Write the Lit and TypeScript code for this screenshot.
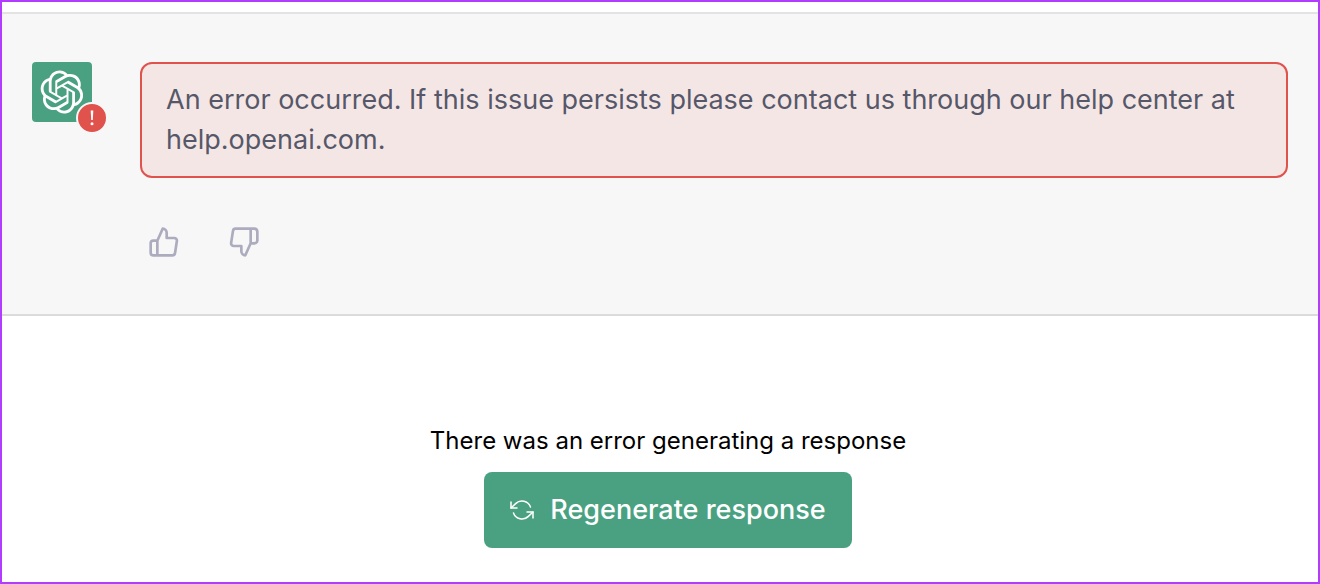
import { LitElement, html, css, svg } from "lit";
import { customElement, state } from "lit/decorators.js";

const logo = svg`<path fill="currentColor" d="M37.5324 16.8707C37.9808 15.5241 38.1363 14.0974 37.9886 12.6859C37.8409 11.2744 37.3934 9.91076 36.676 8.68622C35.6126 6.83404 33.9882 5.3676 32.0373 4.4985C30.0864 3.62941 27.9098 3.40259 25.8215 3.85078C24.8796 2.7893 23.7219 1.94125 22.4257 1.36341C21.1295 0.785575 19.7249 0.491269 18.3058 0.500197C16.1708 0.495044 14.0893 1.16803 12.3614 2.42214C10.6335 3.67624 9.34853 5.44666 8.6917 7.47815C7.30085 7.76286 5.98686 8.3414 4.8377 9.17505C3.68854 10.0087 2.73073 11.0782 2.02839 12.312C0.956464 14.1591 0.498905 16.2988 0.721698 18.4228C0.944492 20.5467 1.83612 22.5449 3.268 24.1293C2.81966 25.4759 2.66413 26.9026 2.81182 28.3141C2.95951 29.7256 3.40701 31.0892 4.12437 32.3138C5.18791 34.1659 6.8123 35.6322 8.76321 36.5013C10.7141 37.3704 12.8907 37.5973 14.9789 37.1492C15.9208 38.2107 17.0786 39.0587 18.3747 39.6366C19.6709 40.2144 21.0755 40.5087 22.4946 40.4998C24.6307 40.5054 26.7133 39.8321 28.4418 38.5772C30.1704 37.3223 31.4556 35.5506 32.1119 33.5179C33.5027 33.2332 34.8167 32.6547 35.9659 31.821C37.115 30.9874 38.0728 29.9178 38.7752 28.684C39.8458 26.8371 40.3023 24.6979 40.0789 22.5748C39.8556 20.4517 38.9639 18.4544 37.5324 16.8707ZM22.4978 37.8849C20.7443 37.8874 19.0459 37.2733 17.6994 36.1501C17.7601 36.117 17.8666 36.0586 17.936 36.0161L25.9004 31.4156C26.1003 31.3019 26.2663 31.137 26.3813 30.9378C26.4964 30.7386 26.5563 30.5124 26.5549 30.2825V19.0542L29.9213 20.998C29.9389 21.0068 29.9541 21.0198 29.9656 21.0359C29.977 21.052 29.9842 21.0707 29.9867 21.0902V30.3889C29.9842 32.375 29.1946 34.2791 27.7909 35.6841C26.3872 37.0892 24.4838 37.8806 22.4978 37.8849ZM6.39227 31.0064C5.51397 29.4888 5.19742 27.7107 5.49804 25.9832C5.55718 26.0187 5.66048 26.0818 5.73461 26.1244L13.699 30.7248C13.8975 30.8408 14.1233 30.902 14.3532 30.902C14.583 30.902 14.8088 30.8408 15.0073 30.7248L24.731 25.1103V28.9979C24.7321 29.0177 24.7283 29.0376 24.7199 29.0556C24.7115 29.0736 24.6988 29.0893 24.6829 29.1012L16.6317 33.7497C14.9096 34.7416 12.8643 35.0097 10.9447 34.4954C9.02506 33.9811 7.38785 32.7263 6.39227 31.0064ZM4.29707 13.6194C5.17156 12.0998 6.55279 10.9364 8.19885 10.3327C8.19885 10.4013 8.19491 10.5228 8.19491 10.6071V19.808C8.19351 20.0378 8.25334 20.2638 8.36823 20.4629C8.48312 20.6619 8.64893 20.8267 8.84863 20.9404L18.5723 26.5542L15.206 28.4979C15.1894 28.5089 15.1703 28.5155 15.1505 28.5173C15.1307 28.5191 15.1107 28.516 15.0924 28.5082L7.04046 23.8557C5.32135 22.8601 4.06716 21.2235 3.55289 19.3046C3.03862 17.3858 3.30624 15.3413 4.29707 13.6194ZM31.955 20.0556L22.2312 14.4411L25.5976 12.4981C25.6142 12.4872 25.6333 12.4805 25.6531 12.4787C25.6729 12.4769 25.6928 12.4801 25.7111 12.4879L33.7631 17.1364C34.9967 17.849 36.0017 18.8982 36.6606 20.1613C37.3194 21.4244 37.6047 22.849 37.4832 24.2684C37.3617 25.6878 36.8382 27.0432 35.9743 28.1759C35.1103 29.3086 33.9415 30.1717 32.6047 30.6641C32.6047 30.5947 32.6047 30.4733 32.6047 30.3889V21.188C32.6066 20.9586 32.5474 20.7328 32.4332 20.5338C32.319 20.3348 32.154 20.1698 31.955 20.0556ZM35.3055 15.0128C35.2464 14.9765 35.1431 14.9142 35.069 14.8717L27.1045 10.2712C26.906 10.1554 26.6803 10.0943 26.4504 10.0943C26.2206 10.0943 25.9948 10.1554 25.7963 10.2712L16.0726 15.8858V11.9982C16.0715 11.9783 16.0753 11.9585 16.0837 11.9405C16.0921 11.9225 16.1048 11.9068 16.1207 11.8949L24.1719 7.25025C25.4053 6.53903 26.8158 6.19376 28.2383 6.25482C29.6608 6.31589 31.0364 6.78077 32.2044 7.59508C33.3723 8.40939 34.2842 9.53945 34.8334 10.8531C35.3826 12.1667 35.5464 13.6095 35.3055 15.0128ZM14.2424 21.9419L10.8752 19.9981C10.8576 19.9893 10.8423 19.9763 10.8309 19.9602C10.8195 19.9441 10.8122 19.9254 10.8098 19.9058V10.6071C10.8107 9.18295 11.2173 7.78848 11.9819 6.58696C12.7466 5.38544 13.8377 4.42659 15.1275 3.82264C16.4173 3.21869 17.8524 2.99464 19.2649 3.1767C20.6775 3.35876 22.0089 3.93941 23.1034 4.85067C23.0427 4.88379 22.937 4.94215 22.8668 4.98473L14.9024 9.58517C14.7025 9.69878 14.5366 9.86356 14.4215 10.0626C14.3065 10.2616 14.2466 10.4877 14.2479 10.7175L14.2424 21.9419ZM16.071 17.9991L20.4018 15.4978L24.7325 17.9975V22.9985L20.4018 25.4983L16.071 22.9985V17.9991Z"/>`;

@customElement("app-root")
export class AppRoot extends LitElement {
  @state() private vote: "up" | "down" | null = null;

  static styles = css`
    :host {
      display: block;
      box-sizing: border-box;
      min-height: 100vh;
      padding: 10px 0 34px;
      border: 2px solid #b23cfd;
      background: #fff;
      color: #000;
      font-family: Inter, "Liberation Sans", sans-serif;
    }
    button {
      border: 0;
      background: none;
      font: inherit;
      color: inherit;
      cursor: pointer;
    }
    svg {
      display: block;
    }
    .line {
      fill: none;
      stroke: currentColor;
      stroke-linecap: round;
      stroke-linejoin: round;
    }
    .message {
      display: flex;
      align-items: flex-start;
      gap: 48px;
      padding: 48px 30px;
      border-top: 2px solid #e3e3e3;
      border-bottom: 2px solid #dbdbdb;
      background: #f7f7f8;
    }
    .avatar {
      position: relative;
      display: grid;
      place-items: center;
      flex: none;
      width: 60px;
      height: 60px;
      border-radius: 4px;
      background: #4aa181;
      color: #fff;
    }
    .badge {
      position: absolute;
      right: -16px;
      bottom: -12px;
      display: grid;
      place-items: center;
      width: 28px;
      height: 28px;
      border: 2px solid #f7f7f8;
      border-radius: 50%;
      background: #e0524c;
    }
    .body {
      flex: 1;
      min-width: 0;
    }
    .alert {
      margin: 0;
      padding: 16px 24px;
      border: 2px solid #e0524c;
      border-radius: 12px;
      background: #f5e6e6;
      color: #565869;
      font-size: 27px;
      line-height: 40px;
    }
    .votes {
      display: flex;
      gap: 32px;
      margin-top: 40px;
      color: #acacbe;
    }
    .vote {
      padding: 8px;
      border-radius: 8px;
    }
    .vote[aria-pressed="true"] {
      color: #565869;
    }
    .footer {
      display: flex;
      flex-direction: column;
      align-items: center;
      gap: 14px;
      padding: 108px 16px 0 32px;
    }
    .note {
      margin: 0;
      font-size: 24px;
      line-height: 34px;
    }
    .regenerate {
      display: flex;
      align-items: center;
      gap: 16px;
      padding: 18px 26px;
      border-radius: 8px;
      background: #4aa181;
      color: #fff;
      font-size: 27px;
      font-weight: 500;
      line-height: 40px;
    }
  `;

  private toggle(value: "up" | "down") {
    this.vote = this.vote === value ? null : value;
  }

  render() {
    return html`
      <section class="message">
        <div class="avatar">
          <svg width="44" height="44" viewBox="0 0 41 41" aria-hidden="true">${logo}</svg>
          <span class="badge">
            <svg width="28" height="28" viewBox="0 0 28 28" fill="#fff" aria-hidden="true">
              <path d="M12.7 6.5h2.6l-.5 9.6h-1.6z" />
              <circle cx="14" cy="19.7" r="1.5" />
            </svg>
          </span>
        </div>
        <div class="body">
          <p class="alert" role="alert">
            An error occurred. If this issue persists please contact us through our help center at help.openai.com.
          </p>
          <div class="votes">
            <button class="vote" aria-label="Good response" aria-pressed=${this.vote === "up"} @click=${() => this.toggle("up")}>
              <svg class="line" width="32" height="32" viewBox="0 0 24 24" stroke-width="2">
                <path d="M14 9V5a3 3 0 0 0-3-3l-4 9v11h11.28a2 2 0 0 0 2-1.7l1.38-9a2 2 0 0 0-2-2.3zM7 22H4a2 2 0 0 1-2-2v-7a2 2 0 0 1 2-2h3" />
              </svg>
            </button>
            <button class="vote" aria-label="Bad response" aria-pressed=${this.vote === "down"} @click=${() => this.toggle("down")}>
              <svg class="line" width="32" height="32" viewBox="0 0 24 24" stroke-width="2">
                <path d="M10 15v4a3 3 0 0 0 3 3l4-9V2H5.72a2 2 0 0 0-2 1.7l-1.38 9a2 2 0 0 0 2 2.3zm7-13h2.67A2.31 2.31 0 0 1 22 4v7a2.31 2.31 0 0 1-2.33 2H17" />
              </svg>
            </button>
          </div>
        </div>
      </section>
      <section class="footer">
        <p class="note">There was an error generating a response</p>
        <button class="regenerate">
          <svg class="line" width="24" height="24" viewBox="0 0 24 24" stroke-width="1.5" aria-hidden="true">
            <polyline points="1 4 1 10 7 10" />
            <polyline points="23 20 23 14 17 14" />
            <path d="M20.49 9A9 9 0 0 0 5.64 5.64L1 10m22 4l-4.64 4.36A9 9 0 0 1 3.51 15" />
          </svg>
          Regenerate response
        </button>
      </section>
    `;
  }
}
